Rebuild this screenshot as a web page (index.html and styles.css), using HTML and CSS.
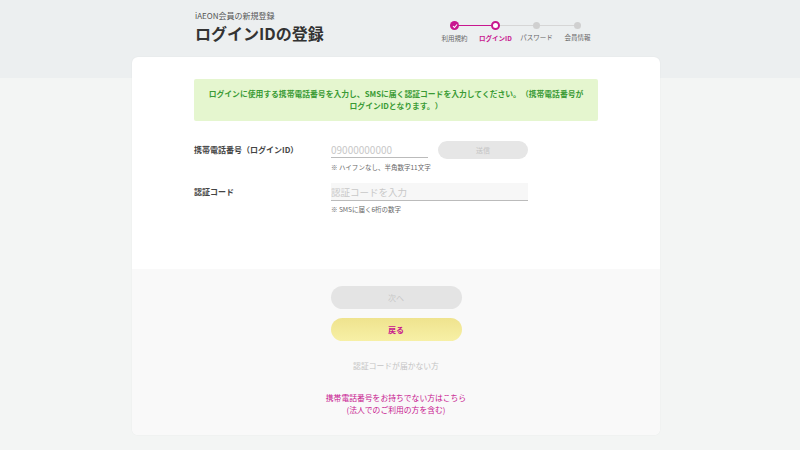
FILE: index.html
```html
<!DOCTYPE html>
<html lang="ja">
<head>
    <meta charset="UTF-8">
    <meta name="viewport" content="width=device-width, initial-scale=1.0">
    <title>ログインIDの登録</title>
    <link rel="stylesheet" href="styles.css">
</head>
<body>
    <div class="page">
        <header class="head">
            <div class="head-titles">
                <p class="sub-title">iAEON会員の新規登録</p>
                <h1 class="title">ログインIDの登録</h1>
            </div>
            <ol class="steps">
                <li class="step done">
                    <span class="dot">
                        <svg width="6" height="6" viewBox="0 0 6 6"><path d="M1 3.2 L2.5 4.5 L5 1.5" fill="none" stroke="#fff" stroke-width="1.1"/></svg>
                    </span>
                    <span class="step-label">利用規約</span>
                </li>
                <li class="step current">
                    <span class="dot"></span>
                    <span class="step-label">ログインID</span>
                </li>
                <li class="step">
                    <span class="dot"></span>
                    <span class="step-label">パスワード</span>
                </li>
                <li class="step last">
                    <span class="dot"></span>
                    <span class="step-label">会員情報</span>
                </li>
            </ol>
        </header>

        <main class="card">
            <section class="card-body">
                <div class="notice">
                    ログインに使用する携帯電話番号を入力し、SMSに届く認証コードを入力してください。（携帯電話番号が<br>ログインIDとなります。）
                </div>

                <div class="form-row">
                    <label class="form-label">携帯電話番号（ログインID）</label>
                    <div class="form-field">
                        <div class="field-line">
                            <input class="input input-tel" type="text" placeholder="09000000000">
                            <button class="btn-send" disabled>送信</button>
                        </div>
                        <p class="hint">※ ハイフンなし、半角数字11文字</p>
                    </div>
                </div>

                <div class="form-row">
                    <label class="form-label">認証コード</label>
                    <div class="form-field">
                        <input class="input input-code" type="text" placeholder="認証コードを入力">
                        <p class="hint">※ SMSに届く6桁の数字</p>
                    </div>
                </div>
            </section>

            <section class="card-foot">
                <button class="btn btn-next" disabled>次へ</button>
                <button class="btn btn-back">戻る</button>
                <p class="no-code">認証コードが届かない方</p>
                <a class="link" href="#">携帯電話番号をお持ちでない方はこちら<br>(法人でのご利用の方を含む)</a>
            </section>
        </main>
    </div>
</body>
</html>
```

FILE: styles.css
```css
* {
    box-sizing: border-box;
}

body {
    margin: 0;
    font-family: "Noto Sans CJK JP", "Noto Sans", sans-serif;
    color: #333;
    background: linear-gradient(#eceff0 78px, #f3f5f4 78px);
    min-height: 450px;
}

.page {
    width: 528px;
    margin-left: calc(50% - 268px);
}

/* header */
.head {
    display: flex;
    justify-content: space-between;
    padding: 10px 62px 0 63px;
    height: 57px;
}

.sub-title {
    margin: 0;
    font-size: 8px;
    line-height: 12px;
    color: #555;
}

.title {
    margin: 1px 0 0;
    font-size: 16px;
    line-height: 20px;
    font-weight: bold;
    color: #333;
}

.steps {
    display: flex;
    list-style: none;
    margin: 11px 0 0;
    padding: 0;
}

.step {
    position: relative;
    width: 41px;
    display: flex;
    flex-direction: column;
    align-items: center;
}

.step::after {
    content: "";
    position: absolute;
    top: 4px;
    left: 50%;
    width: 41px;
    height: 1px;
    background: #d6d6d6;
}

.step.done::after {
    background: #c8178f;
}

.step.last::after {
    display: none;
}

.dot {
    position: relative;
    z-index: 1;
    width: 7px;
    height: 7px;
    margin-top: 1px;
    border-radius: 50%;
    background: #d0d0d0;
    display: flex;
    justify-content: center;
    align-items: center;
}

.step.done .dot {
    width: 9px;
    height: 9px;
    margin-top: 0;
    background: #c8178f;
}

.step.current .dot {
    width: 9px;
    height: 9px;
    margin-top: 0;
    background: #fff;
    border: 2px solid #c8178f;
}

.step-label {
    margin-top: 4px;
    font-size: 6.5px;
    line-height: 9px;
    white-space: nowrap;
    color: #666;
}

.step.current .step-label {
    color: #c8178f;
    font-weight: bold;
}

/* card */
.card {
    background: #fff;
    border-radius: 6px;
    box-shadow: 0 0 2px rgba(0, 0, 0, 0.06);
    overflow: hidden;
}

.card-body {
    padding: 22px 62px 55px;
}

.notice {
    background: #e5f6cf;
    border-radius: 2px;
    padding: 9px 2px;
    text-align: center;
    font-size: 7.8px;
    line-height: 12px;
    font-weight: bold;
    color: #3a9b35;
    white-space: nowrap;
}

.form-row {
    display: flex;
    margin-top: 20px;
}

.form-row + .form-row {
    margin-top: 11px;
}

.form-label {
    width: 137px;
    padding-top: 3px;
    font-size: 8px;
    font-weight: bold;
    color: #444;
}

.form-field {
    width: 197px;
}

.field-line {
    display: flex;
    justify-content: space-between;
    align-items: center;
}

.input {
    display: block;
    border: none;
    border-bottom: 1px solid #bbb;
    font-family: inherit;
    font-size: 10px;
    color: #333;
    outline: none;
}

.input::placeholder {
    color: #c8c8c8;
}

.input-tel {
    width: 97px;
    height: 16px;
    padding: 0;
    background: transparent;
}

.input-code {
    width: 197px;
    height: 18px;
    padding: 0;
    font-size: 9.5px;
    background: #f7f7f7;
}

.btn-send {
    width: 90px;
    height: 18px;
    border: none;
    border-radius: 9px;
    background: #e6e6e6;
    color: #c4c4c4;
    font-family: inherit;
    font-size: 7px;
    padding: 0;
}

.hint {
    margin: 3px 0 0;
    font-size: 6.5px;
    line-height: 10px;
    color: #666;
}

/* footer part of card */
.card-foot {
    background: #f9f9f9;
    padding: 17px 0 19px;
    display: flex;
    flex-direction: column;
    align-items: center;
}

.btn {
    width: 131px;
    height: 23px;
    border: none;
    border-radius: 12px;
    font-family: inherit;
    font-size: 8px;
    padding: 0;
}

.btn-next {
    background: #e4e4e4;
    color: #c8c8c8;
}

.btn-back {
    margin-top: 9px;
    background: linear-gradient(#efe38e, #f7f0a6);
    color: #c8178f;
    font-weight: bold;
}

.no-code {
    margin: 19px 0 0;
    font-size: 7.8px;
    line-height: 12px;
    color: #c4c4c4;
}

.link {
    margin-top: 20px;
    font-size: 7.8px;
    line-height: 12px;
    text-align: center;
    color: #c8178f;
    text-decoration: none;
}
```
